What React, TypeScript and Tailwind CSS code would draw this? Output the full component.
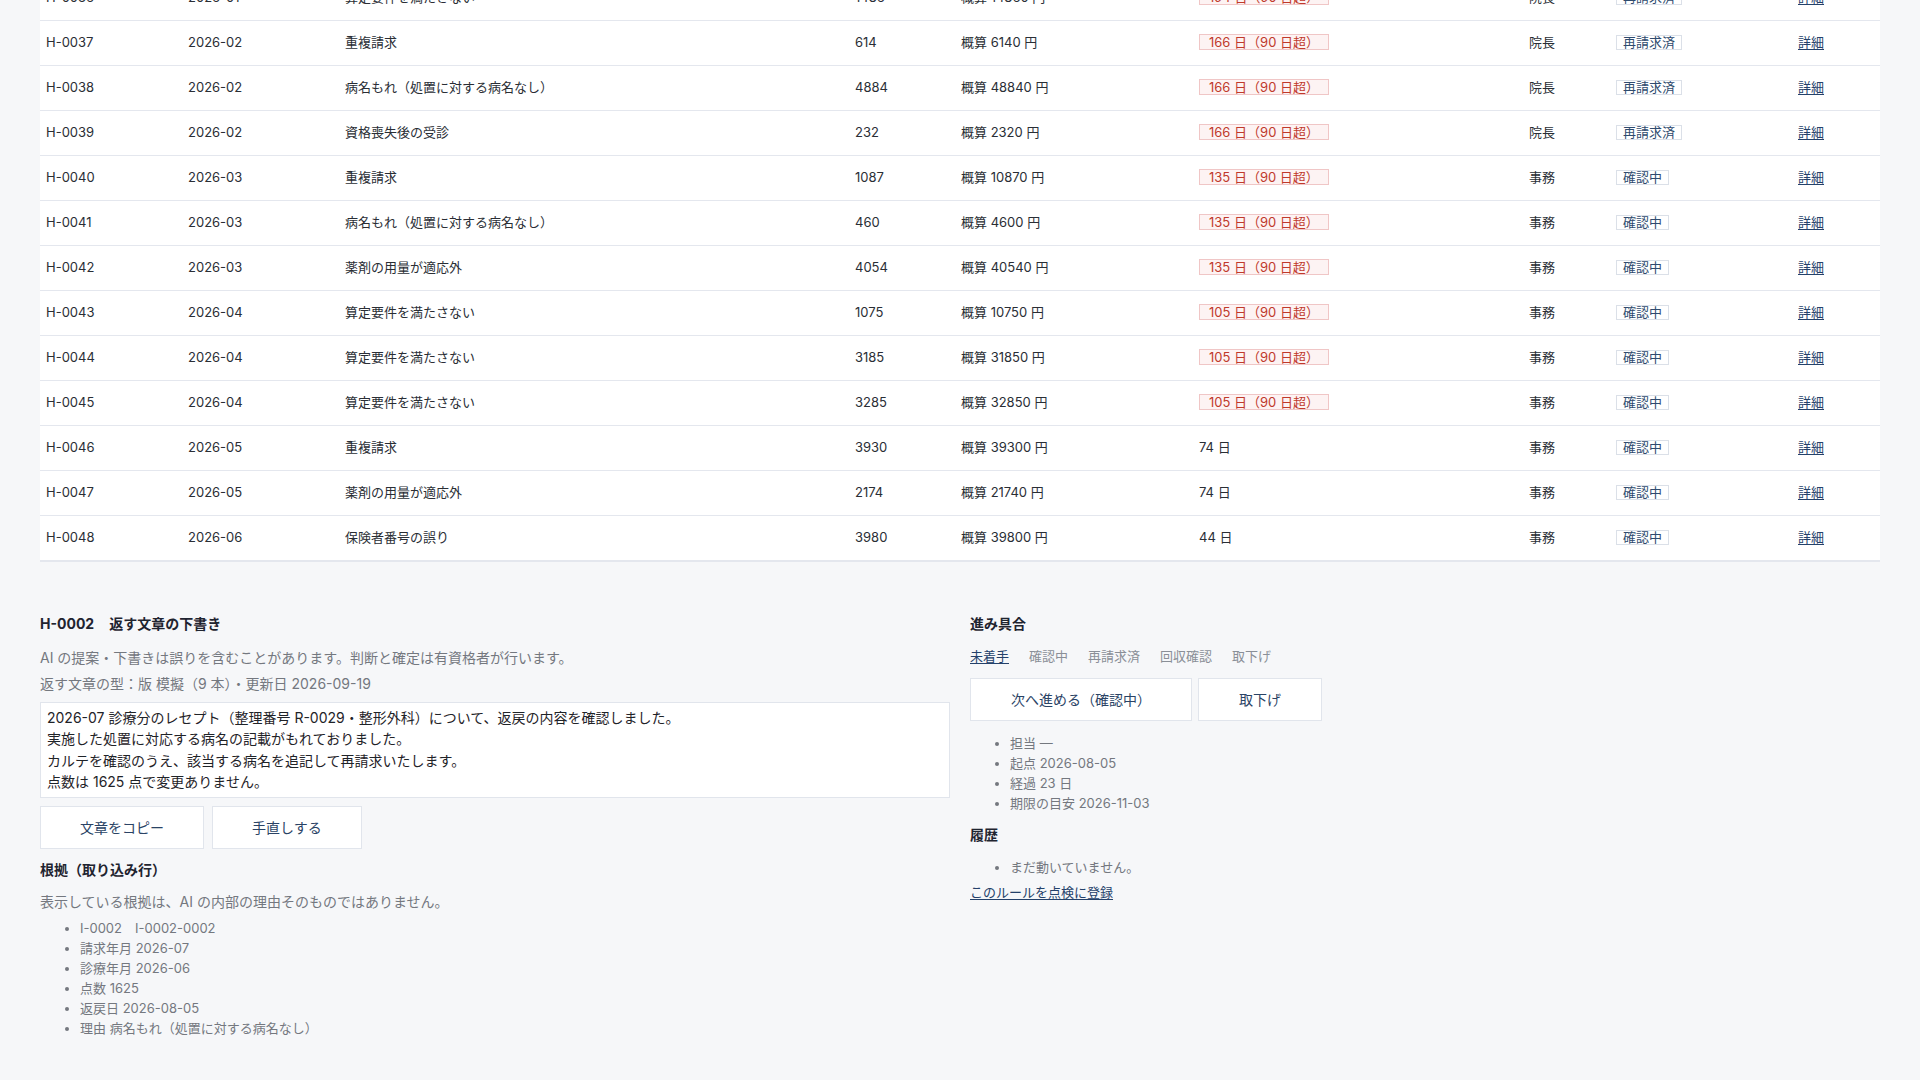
import React from "react";

type Row = {
  id: string;
  month: string;
  reason: string;
  points: string;
  amount: string;
  days: string;
  over: boolean;
  person: string;
  status: string;
};

const rows: Row[] = [
  { id: "H-0036", month: "2026-01", reason: "算定要件を満たさない", points: "1486", amount: "概算 14860 円", days: "194 日（90 日超）", over: true, person: "院長", status: "再請求済" },
  { id: "H-0037", month: "2026-02", reason: "重複請求", points: "614", amount: "概算 6140 円", days: "166 日（90 日超）", over: true, person: "院長", status: "再請求済" },
  { id: "H-0038", month: "2026-02", reason: "病名もれ（処置に対する病名なし）", points: "4884", amount: "概算 48840 円", days: "166 日（90 日超）", over: true, person: "院長", status: "再請求済" },
  { id: "H-0039", month: "2026-02", reason: "資格喪失後の受診", points: "232", amount: "概算 2320 円", days: "166 日（90 日超）", over: true, person: "院長", status: "再請求済" },
  { id: "H-0040", month: "2026-03", reason: "重複請求", points: "1087", amount: "概算 10870 円", days: "135 日（90 日超）", over: true, person: "事務", status: "確認中" },
  { id: "H-0041", month: "2026-03", reason: "病名もれ（処置に対する病名なし）", points: "460", amount: "概算 4600 円", days: "135 日（90 日超）", over: true, person: "事務", status: "確認中" },
  { id: "H-0042", month: "2026-03", reason: "薬剤の用量が適応外", points: "4054", amount: "概算 40540 円", days: "135 日（90 日超）", over: true, person: "事務", status: "確認中" },
  { id: "H-0043", month: "2026-04", reason: "算定要件を満たさない", points: "1075", amount: "概算 10750 円", days: "105 日（90 日超）", over: true, person: "事務", status: "確認中" },
  { id: "H-0044", month: "2026-04", reason: "算定要件を満たさない", points: "3185", amount: "概算 31850 円", days: "105 日（90 日超）", over: true, person: "事務", status: "確認中" },
  { id: "H-0045", month: "2026-04", reason: "算定要件を満たさない", points: "3285", amount: "概算 32850 円", days: "105 日（90 日超）", over: true, person: "事務", status: "確認中" },
  { id: "H-0046", month: "2026-05", reason: "重複請求", points: "3930", amount: "概算 39300 円", days: "74 日", over: false, person: "事務", status: "確認中" },
  { id: "H-0047", month: "2026-05", reason: "薬剤の用量が適応外", points: "2174", amount: "概算 21740 円", days: "74 日", over: false, person: "事務", status: "確認中" },
  { id: "H-0048", month: "2026-06", reason: "保険者番号の誤り", points: "3980", amount: "概算 39800 円", days: "44 日", over: false, person: "事務", status: "確認中" },
];

function TableRow({ r, last }: { r: Row; last: boolean }) {
  return (
    <div
      className={
        "grid grid-cols-[142px_157px_510px_106px_238px_330px_87px_182px_88px] items-center text-[13px] leading-[16px] text-[#2a2e35] border-[#e4e7ee] " +
        (last ? "border-b-2 h-[46px]" : "border-b h-[45px]")
      }
    >
      <div className="px-[6px] pb-[2px]">{r.id}</div>
      <div className="px-[6px] pb-[2px]">{r.month}</div>
      <div className="px-[6px] pb-[2px]">{r.reason}</div>
      <div className="px-[6px] pb-[2px]">{r.points}</div>
      <div className="px-[6px] pb-[2px]">{r.amount}</div>
      <div className="px-[6px] pb-[2px]">
        {r.over ? (
          <span className="inline-block border border-[#f0c6c6] bg-[#fdf3f3] text-[#c0392b] px-[9px] leading-[14px]">
            {r.days}
          </span>
        ) : (
          <span>{r.days}</span>
        )}
      </div>
      <div className="px-[6px] pb-[2px]">{r.person}</div>
      <div className="px-[6px] pb-[2px]">
        <span className="inline-block border border-[#dbe0e8] bg-white text-[#2f4b6e] px-[6px] leading-[13px]">
          {r.status}
        </span>
      </div>
      <div className="px-[6px] pb-[2px]">
        <a href="#" className="text-[#24416a] underline underline-offset-2">
          詳細
        </a>
      </div>
    </div>
  );
}

function Btn({ children, wide }: { children: React.ReactNode; wide?: boolean }) {
  return (
    <button
      type="button"
      className={
        "h-[43px] border border-[#e1e5ec] bg-white text-[14px] leading-[20px] text-[#2a4365] " +
        (wide ? "px-[40px]" : "px-[39px]")
      }
    >
      {children}
    </button>
  );
}

export default function App() {
  const draft =
    "2026-07 診療分のレセプト（整理番号 R-0029・整形外科）について、返戻の内容を確認しました。\n実施した処置に対応する病名の記載がもれておりました。\nカルテを確認のうえ、該当する病名を追記して再請求いたします。\n点数は 1625 点で変更ありません。";

  return (
    <div className="min-h-screen overflow-hidden bg-[#f6f7f9] px-10 font-['Inter','Noto_Sans_CJK_JP',sans-serif] text-[#2d3138]">
      <div className="mt-[-24px] bg-white">
        {rows.map((r, i) => (
          <TableRow key={r.id} r={r} last={i === rows.length - 1} />
        ))}
      </div>

      <div className="grid grid-cols-2 gap-5 mt-[52px]">
        {/* left */}
        <section>
          <h3 className="text-[14px] leading-[20px] font-bold text-[#1f2430]">
            H-0002<span className="ml-[15px]">返す文章の下書き</span>
          </h3>
          <p className="mt-[14px] text-[14px] leading-[20px] text-[#74787f]">
            AI の提案・下書きは誤りを含むことがあります。判断と確定は有資格者が行います。
          </p>
          <p className="mt-[6px] text-[14px] leading-[20px] text-[#74787f]">
            返す文章の型：版 模擬（9 本）・更新日 2026-09-19
          </p>
          <textarea
            readOnly
            value={draft}
            className="mt-[8px] block w-full h-[96px] resize-none border border-[#e1e5ec] bg-white px-[6px] pt-[4px] pb-[4px] text-[14px] leading-[21.3px] text-[#1f2328] outline-none overflow-hidden"
          />
          <div className="mt-[8px] flex gap-[8px]">
            <Btn>文章をコピー</Btn>
            <Btn>手直しする</Btn>
          </div>
          <h3 className="mt-[11px] text-[14px] leading-[20px] font-bold text-[#1f2430]">
            根拠（取り込み行）
          </h3>
          <p className="mt-[12px] text-[14px] leading-[20px] text-[#74787f]">
            表示している根拠は、AI の内部の理由そのものではありません。
          </p>
          <ul className="mt-[6px] list-disc pl-10 text-[13px] leading-[20px] text-[#74787f]">
            <li>I-0002　I-0002-0002</li>
            <li>請求年月 2026-07</li>
            <li>診療年月 2026-06</li>
            <li>点数 1625</li>
            <li>返戻日 2026-08-05</li>
            <li>理由 病名もれ（処置に対する病名なし）</li>
          </ul>
        </section>

        {/* right */}
        <section>
          <h3 className="text-[14px] leading-[20px] font-bold text-[#1f2430]">進み具合</h3>
          <div className="mt-[12px] flex gap-5 text-[13px] leading-[20px] text-[#8a8f97]">
            <a href="#" className="text-[#24416a] underline underline-offset-2">
              未着手
            </a>
            <span>確認中</span>
            <span>再請求済</span>
            <span>回収確認</span>
            <span>取下げ</span>
          </div>
          <div className="mt-[12px] flex gap-[6px]">
            <Btn wide>次へ進める（確認中）</Btn>
            <Btn wide>取下げ</Btn>
          </div>
          <ul className="mt-[12px] list-disc pl-10 text-[13px] leading-[20px] text-[#74787f]">
            <li>担当 —</li>
            <li>起点 2026-08-05</li>
            <li>経過 23 日</li>
            <li>期限の目安 2026-11-03</li>
          </ul>
          <h3 className="mt-[12px] text-[14px] leading-[20px] font-bold text-[#1f2430]">履歴</h3>
          <ul className="mt-[12px] list-disc pl-10 text-[13px] leading-[20px] text-[#74787f]">
            <li>まだ動いていません。</li>
          </ul>
          <a href="#" className="mt-[5px] block w-fit text-[13px] leading-[20px] text-[#24416a] underline underline-offset-2">
            このルールを点検に登録
          </a>
        </section>
      </div>
    </div>
  );
}
